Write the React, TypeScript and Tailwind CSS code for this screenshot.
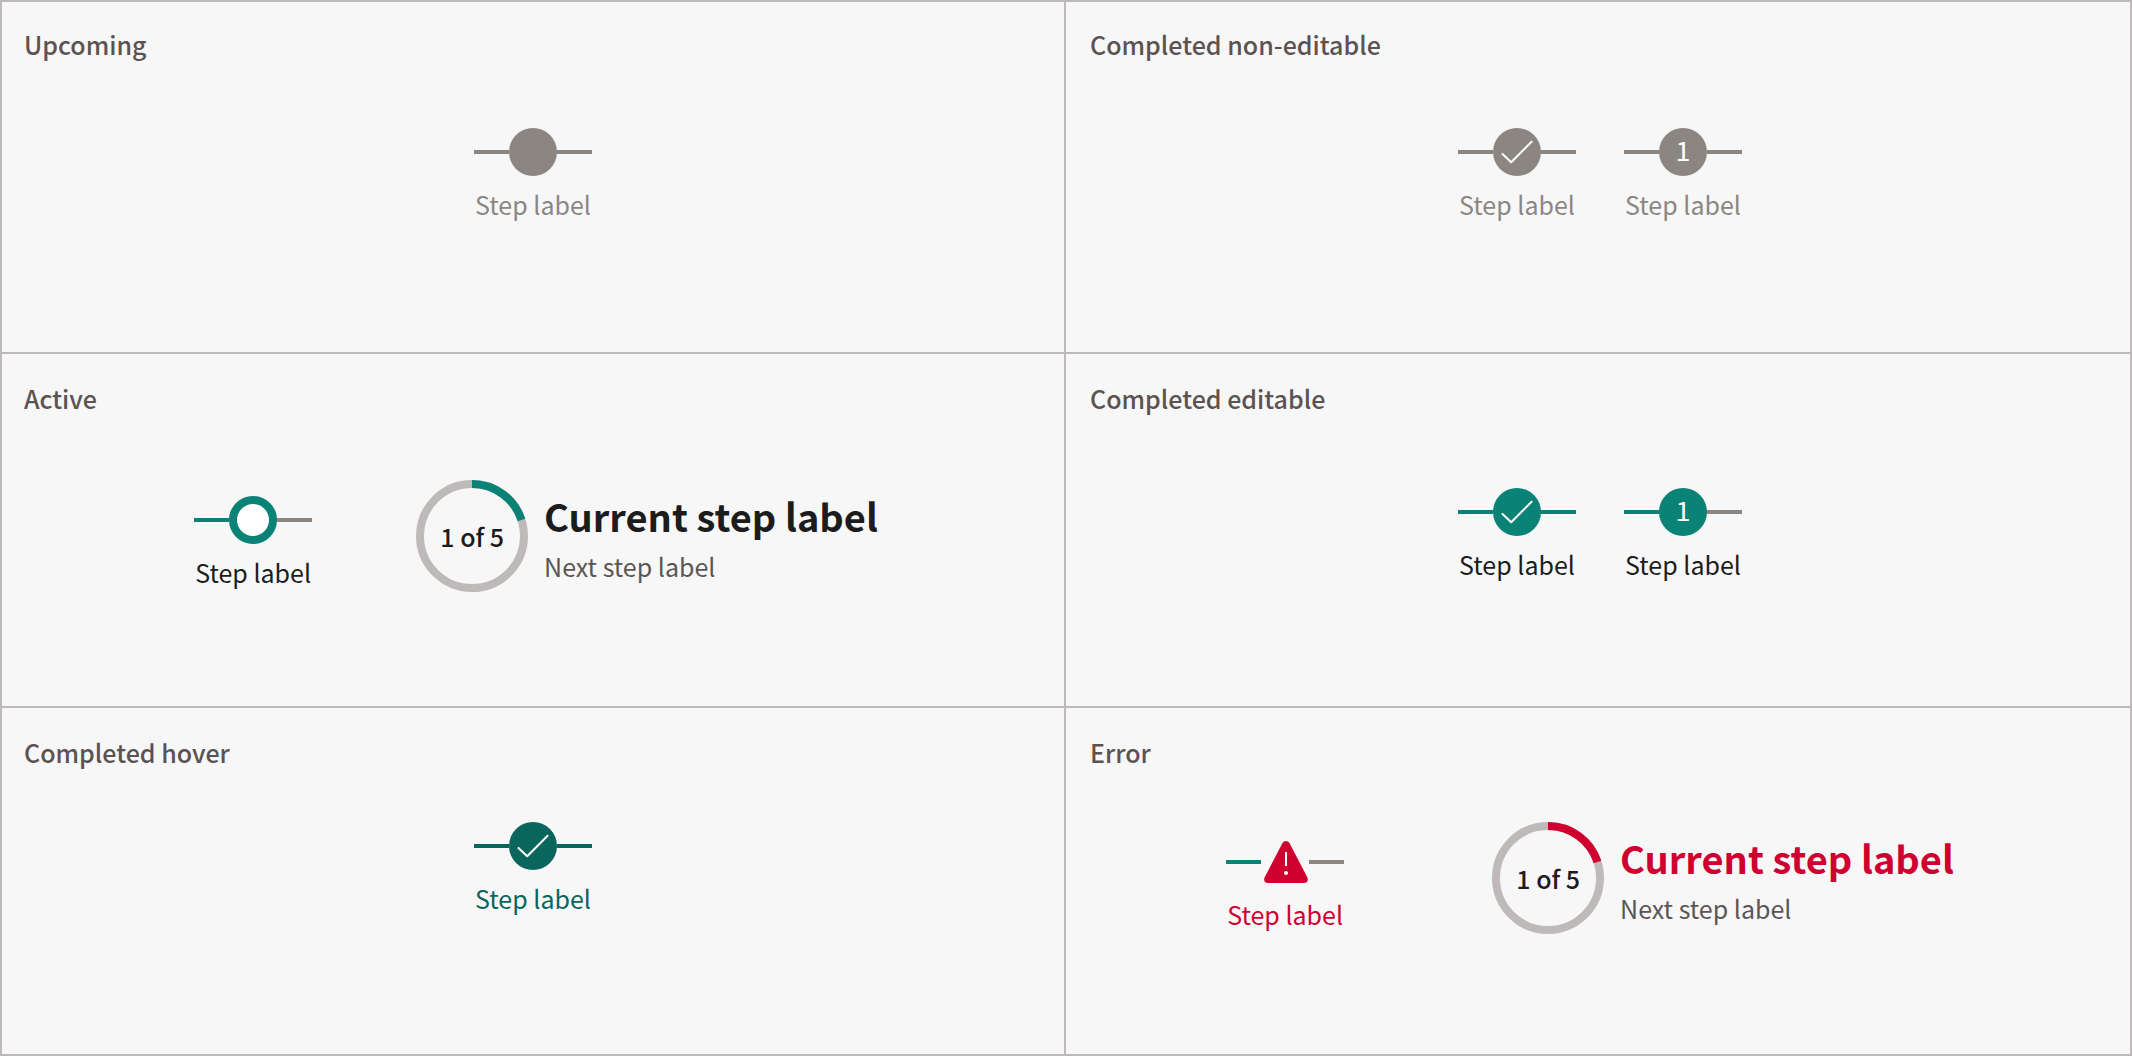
import type { ReactNode } from "react";

type Tone = "grey" | "teal" | "hover";

const barTone: Record<Tone, string> = {
  grey: "bg-[#8c8683]",
  teal: "bg-[#0a8276]",
  hover: "bg-[#0a655c]",
};

function CheckIcon() {
  return (
    <svg viewBox="0 0 48 48" className="size-12" fill="none" stroke="#fff" strokeWidth="2" aria-hidden="true">
      <path d="M9.5 26 L18.2 34.2 L38.6 13.8" strokeLinejoin="round" strokeLinecap="round" />
    </svg>
  );
}

function ErrorIcon() {
  return (
    <svg viewBox="0 0 48 48" className="size-12" aria-hidden="true">
      <path
        d="M21.4 5.2 Q22.6 3 25 3 Q27.4 3 28.6 5.2 L46.3 39.2 Q48.2 44.5 43 45 L7 45 Q1.8 44.5 3.7 39.2 Z"
        fill="#cf0030"
      />
      <rect x="24" y="14" width="2" height="14" fill="#fff" />
      <circle cx="25" cy="35" r="2" fill="#fff" />
    </svg>
  );
}

function StepNumber({ value }: { value: number }) {
  return <span className="pb-1 text-[27px] leading-10 text-white">{value}</span>;
}

function Step({
  before,
  after,
  marker,
  labelClass,
  children,
}: {
  before: Tone;
  after: Tone;
  marker: string;
  labelClass: string;
  children?: ReactNode;
}) {
  return (
    <div className="flex flex-col items-center gap-2">
      <div className="flex items-center">
        <span className={`h-1 w-[35px] ${barTone[before]}`} />
        <span className={`flex size-12 items-center justify-center rounded-full ${marker}`}>{children}</span>
        <span className={`h-1 w-[35px] ${barTone[after]}`} />
      </div>
      <span className={`text-[25px] leading-10 ${labelClass}`}>Step label</span>
    </div>
  );
}

function Progress({ color, headingClass }: { color: string; headingClass: string }) {
  const circumference = 2 * Math.PI * 52;
  return (
    <div className="flex items-center gap-4">
      <div className="grid size-28 place-items-center">
        <svg viewBox="0 0 112 112" className="col-start-1 row-start-1 size-28 -rotate-90" fill="none" strokeWidth="8" aria-hidden="true">
          <circle cx="56" cy="56" r="52" stroke="#bebab9" />
          <circle cx="56" cy="56" r="52" stroke={color} strokeDasharray={`${circumference / 5} ${circumference}`} />
        </svg>
        <span className="col-start-1 row-start-1 text-[25px] leading-10 font-medium text-[#1c1c1c]">1 of 5</span>
      </div>
      <div className="flex flex-col">
        <span className={`text-[38px] leading-[60px] font-bold ${headingClass}`}>Current step label</span>
        <span className="text-[25px] leading-10 text-[#5b5655]">Next step label</span>
      </div>
    </div>
  );
}

function Cell({ title, className, children }: { title: string; className: string; children: ReactNode }) {
  return (
    <section className={`border-[#bfbaba] ${className}`}>
      <h2 className="text-[25px] leading-10 font-medium text-[#5b5352]">{title}</h2>
      {children}
    </section>
  );
}

export default function App() {
  return (
    <main className="grid grid-cols-2 bg-[#f7f7f7] font-['Noto_Sans_CJK_SC','Noto_Sans',sans-serif]">
      <Cell title="Upcoming" className="border-2 px-[22px] pt-[22px] pb-32">
        <div className="flex justify-center pt-16">
          <Step before="grey" after="grey" marker="bg-[#8c8683]" labelClass="text-[#8c8683]" />
        </div>
      </Cell>
      <Cell title="Completed non-editable" className="border-y-2 border-r-2 pt-[22px] pr-5 pb-32 pl-6">
        <div className="flex justify-center gap-12 pt-16">
          <Step before="grey" after="grey" marker="bg-[#8c8683]" labelClass="text-[#8c8683]">
            <CheckIcon />
          </Step>
          <Step before="grey" after="grey" marker="bg-[#8c8683]" labelClass="text-[#8c8683]">
            <StepNumber value={1} />
          </Step>
        </div>
      </Cell>

      <Cell title="Active" className="border-x-2 border-b-2 px-[22px] pt-6 pb-[114px]">
        <div className="flex items-end justify-center gap-[104px] pt-[62px] pl-1.5">
          <Step before="teal" after="grey" marker="border-8 border-[#0a8276] bg-white" labelClass="text-[#1c1c1c]" />
          <Progress color="#0a8276" headingClass="text-[#1c1c1c]" />
        </div>
      </Cell>
      <Cell title="Completed editable" className="border-r-2 border-b-2 pt-6 pr-5 pb-[114px] pl-6">
        <div className="flex justify-center gap-12 pt-[70px]">
          <Step before="teal" after="teal" marker="bg-[#0a8276]" labelClass="text-[#1c1c1c]">
            <CheckIcon />
          </Step>
          <Step before="teal" after="grey" marker="bg-[#0a8276]" labelClass="text-[#1c1c1c]">
            <StepNumber value={1} />
          </Step>
        </div>
      </Cell>

      <Cell title="Completed hover" className="border-x-2 border-b-2 px-[22px] pt-6 pb-[120px]">
        <div className="flex justify-center pt-[50px]">
          <Step before="hover" after="hover" marker="bg-[#0a655c]" labelClass="text-[#0a655c]">
            <CheckIcon />
          </Step>
        </div>
      </Cell>
      <Cell title="Error" className="border-r-2 border-b-2 pt-6 pr-5 pb-[120px] pl-6">
        <div className="flex items-end justify-center gap-[148px] pt-[50px] pr-5">
          <Step before="teal" after="grey" marker="" labelClass="text-[#cf0030]">
            <ErrorIcon />
          </Step>
          <Progress color="#cf0030" headingClass="text-[#cf0030]" />
        </div>
      </Cell>
    </main>
  );
}
